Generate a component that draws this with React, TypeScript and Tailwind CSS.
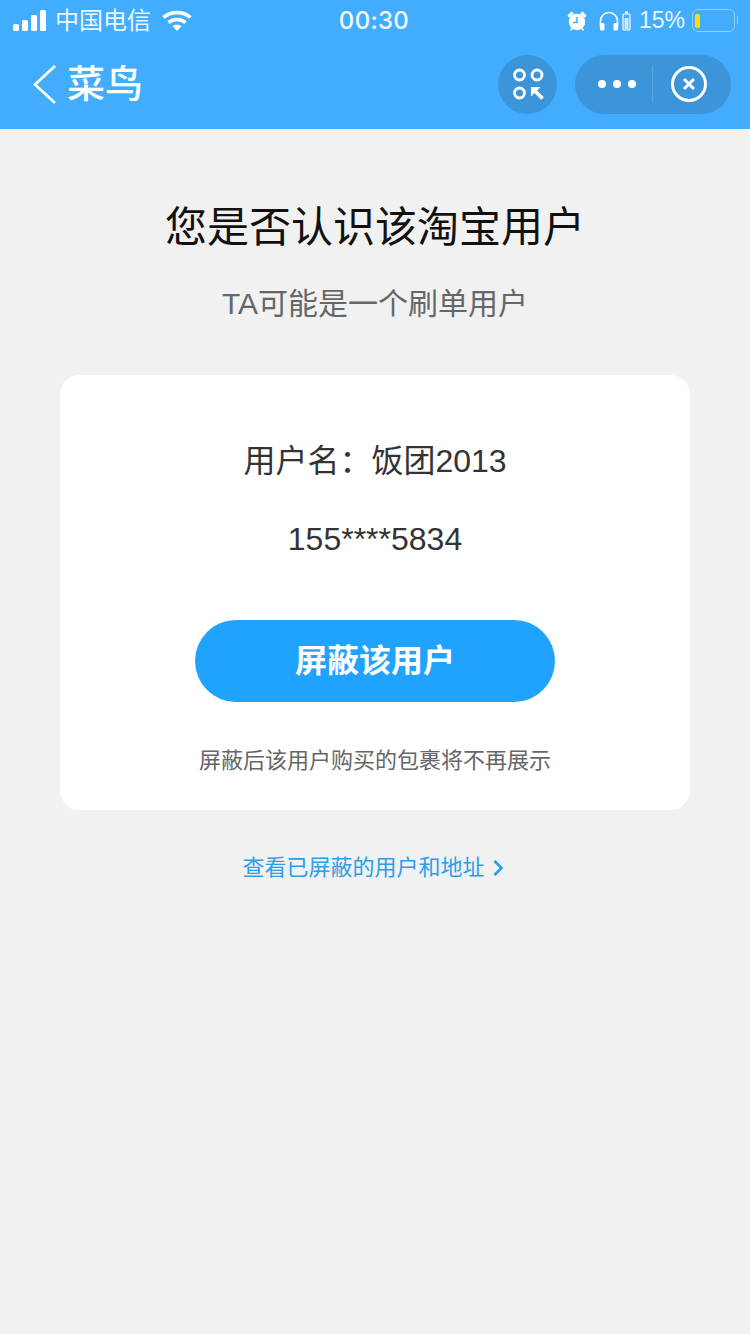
export default function App() {
  return (
    <div className="w-[750px] h-[1334px] bg-[#f1f1f1] flex flex-col items-center overflow-hidden font-['Liberation_Sans','Noto_Sans_CJK_SC',sans-serif]">
      {/* 顶部蓝色区域 */}
      <div className="w-full h-[129px] bg-[#42adff] text-white shrink-0">
        <div className="h-[40px] pt-[1px] pl-[13px] pr-[15px] grid grid-cols-[300px_1fr_300px] items-center">
          <div className="flex items-center">
            <svg width="34" height="22" viewBox="0 0 34 22" fill="#fff">
              <rect x="0" y="14" width="6" height="7" rx="1.5" />
              <rect x="9" y="10" width="6" height="11" rx="1.5" />
              <rect x="18" y="5" width="6" height="16" rx="1.5" />
              <rect x="27" y="0" width="6" height="21" rx="1.5" />
            </svg>
            <span className="ml-[8px] text-[24px] leading-none text-[#eaf6ff]">中国电信</span>
            <svg className="ml-[11px]" width="30" height="22" viewBox="0 0 30 22" fill="none" stroke="#fff" strokeWidth="3.6">
              <path d="M1.5 7.5C9 1 21 1 28.5 7.5" />
              <path d="M6.5 12.5C11.5 8.5 18.5 8.5 23.5 12.5" />
              <path d="M15 21l-4.5-5c2.6-1.6 6.4-1.6 9 0z" fill="#fff" stroke="none" />
            </svg>
          </div>
          <div className="text-center font-['Inter',sans-serif] text-[24px] leading-none font-medium tracking-[0.3px] text-[#f2f9ff]">00:30</div>
          <div className="flex items-center justify-end">
            <svg width="20" height="20" viewBox="0 0 20 20" fill="#fff">
              <circle cx="10" cy="11" r="8.2" />
              <path d="M0.5 4.5 4.5 0.5 7 2.4 2.4 7zM19.5 4.5 15.5 0.5 13 2.4 17.6 7z" />
              <path d="M10 6v5.5H6" fill="none" stroke="#42adff" strokeWidth="1.5" />
              <path d="M3.5 19.5l2-2.5M16.5 19.5l-2-2.5" stroke="#fff" strokeWidth="1.5" />
            </svg>
            <svg className="ml-[12px]" width="20" height="20" viewBox="0 0 20 20" fill="none" stroke="#fff" strokeWidth="1.6">
              <path d="M1.5 16V10a8.5 8.5 0 0 1 17 0v6" />
              <rect x="1" y="12" width="4.5" height="7.5" rx="1.5" fill="#fff" stroke="none" />
              <rect x="14.5" y="12" width="4.5" height="7.5" rx="1.5" fill="#fff" stroke="none" />
            </svg>
            <svg className="ml-[3px]" width="9" height="20" viewBox="0 0 9 20" fill="none" stroke="#fff" strokeWidth="1.2">
              <rect x="1" y="3" width="7" height="16" rx="1" />
              <rect x="3" y="0.5" width="3" height="2" fill="#fff" stroke="none" />
              <rect x="2.5" y="7" width="4" height="11" fill="#cfeaff" stroke="none" />
            </svg>
            <span className="ml-[8px] text-[23px] leading-none text-[#eaf6ff]">15%</span>
            <div className="ml-[7px] relative w-[43px] h-[23px] rounded-[6px] border-[1.5px] border-[#8fd0ff] flex items-center pl-[2px]">
              <div className="w-[5px] h-[14px] rounded-[2px] bg-[#ffdd00]" />
              <div className="absolute -right-[4px] top-[6px] w-[1.5px] h-[8px] bg-[#8fd0ff]" />
            </div>
          </div>
        </div>
        <div className="h-[89px] pb-[1px] flex items-center pl-[32px] pr-[19px]">
          <svg width="25" height="39" viewBox="0 0 25 39" fill="none" stroke="#fff" strokeWidth="2.7">
            <path d="M23 1 3 19.5 23 38" />
          </svg>
          <span className="ml-[10px] text-[38px] leading-none font-medium">菜鸟</span>
          <div className="ml-auto w-[59px] h-[59px] rounded-full bg-[#3c95d9] flex items-center justify-center">
            <svg width="32" height="32" viewBox="0 0 32 32" fill="none" stroke="#fff" strokeWidth="2.8">
              <circle cx="7.5" cy="7" r="5" />
              <circle cx="25" cy="7" r="5" />
              <circle cx="7.5" cy="25" r="5" />
              <path d="M22 22l8.5 8.5" strokeWidth="3.8" />
              <path d="M19 28.5V19h9.5z" fill="#fff" stroke="none" />
            </svg>
          </div>
          <div className="ml-[18px] w-[156px] h-[59px] rounded-full bg-[#3c95d9] flex items-center">
            <div className="w-[61px] flex justify-end gap-[7px]">
              <span className="w-[8px] h-[8px] rounded-full bg-white" />
              <span className="w-[8px] h-[8px] rounded-full bg-white" />
              <span className="w-[8px] h-[8px] rounded-full bg-white" />
            </div>
            <div className="ml-[16px] w-px h-[36px] bg-[#55a4e0]" />
            <div className="ml-[18px] w-[36px] h-[36px] rounded-full border-[3px] border-white flex items-center justify-center">
              <svg width="14" height="14" viewBox="0 0 14 14" stroke="#fff" strokeWidth="3">
                <path d="M2 2l10 10M12 2 2 12" />
              </svg>
            </div>
          </div>
        </div>
      </div>

      {/* 标题 */}
      <h1 className="mt-[74px] text-[42px] leading-[50px] font-normal text-[#111111]">您是否认识该淘宝用户</h1>
      <p className="mt-[31px] text-[30px] leading-[40px] text-[#666666]">TA可能是一个刷单用户</p>

      {/* 用户卡片 */}
      <div className="mt-[51px] w-[630px] h-[435px] bg-white rounded-[20px] flex flex-col items-center text-[#333333]">
        <p className="mt-[66px] text-[32px] leading-[40px]">用户名：饭团2013</p>
        <p className="mt-[38px] text-[32px] leading-[40px]">155****5834</p>
        <button className="mt-[61px] w-[360px] h-[82px] rounded-[41px] bg-[#1fa3ff] text-white text-[32px] font-bold">
          屏蔽该用户
        </button>
        <p className="mt-[43px] text-[22px] leading-[32px] text-[#666666]">屏蔽后该用户购买的包裹将不再展示</p>
      </div>

      <div className="mt-[42px] pr-[5px] flex items-center text-[22px] leading-[32px] text-[#2a9fea]">
        <span>查看已屏蔽的用户和地址</span>
        <svg className="ml-[8px]" width="10" height="16" viewBox="0 0 10 16" fill="none" stroke="#1f9cf0" strokeWidth="2.6">
          <path d="M1.5 1 8.5 8l-7 7" />
        </svg>
      </div>
    </div>
  )
}
